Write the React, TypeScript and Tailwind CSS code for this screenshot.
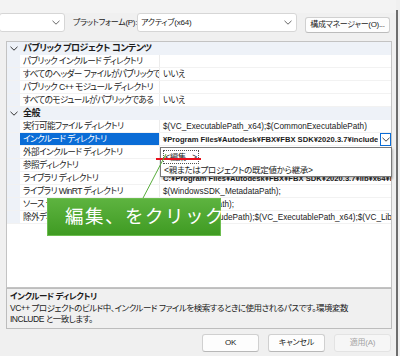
import React from 'react'

const Chevron = ({ className = '' }: { className?: string }) => (
  <svg width="8" height="5" viewBox="0 0 8 5" className={className}>
    <path d="M0.5 0.8 L4 4.2 L7.5 0.8" fill="none" stroke="currentColor" strokeWidth="1" />
  </svg>
)

type RowProps = { name: string; value?: string; bold?: boolean; latin?: boolean; selected?: boolean }

// property grid row: gutter | name | value
function Row({ name, value = '', bold, latin, selected }: RowProps) {
  return (
    <div className="flex h-[13px] border-b border-[#f2f2f2]">
      <div className="w-[13px] shrink-0 bg-[#eef2f8]" />
      <div
        className={
          'w-[140px] shrink-0 pl-[3px] text-[8.6px] tracking-[-0.6px] leading-[13px] whitespace-nowrap overflow-hidden border-r border-[#ececec] ' +
          (selected ? 'bg-[#0a6cd6] text-white' : '')
        }
      >
        {name}
      </div>
      <div className="flex-1 min-w-0 relative flex items-center">
        <div
          className={
            'pl-[3px] whitespace-nowrap overflow-hidden leading-[13px] ' +
            (latin ? (bold ? 'text-[7.6px] font-bold' : 'text-[8.2px]') : 'text-[8.6px] tracking-[-0.6px]')
          }
        >
          {value}
        </div>
        {selected && (
          <div className="absolute right-[0px] top-[0px] w-[11px] h-[13px] border border-[#0a6cd6] bg-white flex items-center justify-center text-[#444]">
            <Chevron />
          </div>
        )}
      </div>
    </div>
  )
}

function Category({ name }: { name: string }) {
  return (
    <div className="flex items-center h-[13px] bg-[#eef2f8]">
      <div className="w-[13px] shrink-0 flex justify-center text-[#333]">
        <Chevron />
      </div>
      <div className="pl-[3px] text-[9px] tracking-[-0.5px] leading-[13px] font-bold">{name}</div>
    </div>
  )
}

export default function App() {
  return (
    <div className="w-[400px] h-[356px] overflow-hidden relative flex bg-[#f0f0f0] text-[#1b1b1b] font-['Liberation_Sans','Noto_Sans_CJK_JP',sans-serif] [font-feature-settings:'palt']">
      <div className="w-[396px] flex flex-col">
        <div className="h-[13px] bg-[#f3f3f3]" />
        <div className="flex items-start h-[20px]">
          <div className="w-[66px] h-[19px] ml-[-1px] bg-white border border-[#d6d6d6] rounded-[3px] flex items-center justify-end pr-[4px] text-[#666]">
            <Chevron />
          </div>
          <div className="ml-[8px] w-[57px] text-[8px] tracking-[-0.3px] leading-[19px] whitespace-nowrap">プラットフォーム(P):</div>
          <div className="ml-[7px] w-[160px] h-[19px] bg-white border border-[#d6d6d6] rounded-[3px] flex items-center justify-between pl-[3px] pr-[4px] text-[8px] tracking-[-0.2px] text-[#666]">
            <span className="text-[#1b1b1b]">アクティブ(x64)</span>
            <Chevron />
          </div>
          <div className="ml-[8px] mt-[4px] w-[85px] h-[16px] bg-[#fdfdfd] border border-[#d0d0d0] border-b-[#bcbcbc] rounded-[3px] flex items-center justify-center text-[8px] tracking-[-0.3px] whitespace-nowrap">
            構成マネージャー(O)...
          </div>
        </div>

        <div className="mt-[8px] ml-[6px] w-[386px] h-[247px] border border-[#c3c3c3] bg-white overflow-hidden flex flex-col">
          <Category name="パブリック プロジェクト コンテンツ" />
          <Row name="パブリック インクルード ディレクトリ" />
          <Row name="すべてのヘッダー ファイルがパブリックである" value="いいえ" />
          <Row name="パブリック C++ モジュール ディレクトリ" />
          <Row name="すべてのモジュールがパブリックである" value="いいえ" />
          <Category name="全般" />
          <Row name="実行可能ファイル ディレクトリ" latin value="$(VC_ExecutablePath_x64);$(CommonExecutablePath)" />
          <Row name="インクルード ディレクトリ" latin bold selected value="¥Program Files¥Autodesk¥FBX¥FBX SDK¥2020.3.7¥include" />
          <Row name="外部インクルード ディレクトリ" latin value="$(VC_IncludePath);$(WindowsSDK_IncludePath);" />
          <Row name="参照ディレクトリ" latin value="$(VC_ReferencesPath_x64);" />
          <Row name="ライブラリ ディレクトリ" latin bold value="C:¥Program Files¥Autodesk¥FBX¥FBX SDK¥2020.3.7¥lib¥x64¥release" />
          <Row name="ライブラリ WinRT ディレクトリ" latin value="$(WindowsSDK_MetadataPath);" />
          <Row name="ソース ディレクトリ" latin value="$(VC_SourcePath);" />
          <Row name="除外ディレクトリ" latin value="$(CommonExcludePath);$(VC_ExecutablePath_x64);$(VC_LibraryPath_x64)" />
        </div>

        <div className="ml-[6px] w-[386px] h-[41px] border border-[#bdbdbd] bg-[#f0f0f0] px-[3px] pt-[2px] text-[8.5px] tracking-[-0.5px] leading-[11.5px]">
          <div className="font-bold">インクルード ディレクトリ</div>
          <div className="whitespace-nowrap">VC++ プロジェクトのビルド中、インクルード ファイルを検索するときに使用されるパスです。環境変数</div>
          <div>INCLUDE と一致します。</div>
        </div>

        <div className="mt-[5px] flex justify-end gap-[9px] pr-[5px] text-[8px] tracking-[-0.2px]">
          <div className="w-[57px] h-[18px] bg-[#fdfdfd] border border-[#d0d0d0] border-b-[#b8b8b8] rounded-[3px] flex items-center justify-center">OK</div>
          <div className="w-[57px] h-[18px] bg-[#fdfdfd] border border-[#d0d0d0] border-b-[#b8b8b8] rounded-[3px] flex items-center justify-center">キャンセル</div>
          <div className="w-[57px] h-[18px] bg-[#f6f6f6] border border-[#e3e3e3] rounded-[3px] flex items-center justify-center text-[#a3a3a3]">適用(A)</div>
        </div>
      </div>
      <div className="w-[2px] bg-[#6e6e6e] mt-[10px]" />
      <div className="flex-1 bg-[#f0f0f0]" />

      {/* dropdown popup */}
      <div className="absolute left-[160px] top-[147px] w-[232px] h-[30px] bg-white border border-[#7a7a7a] shadow-[1px_2px_2px_rgba(0,0,0,0.25)] pt-[2px] text-[8.5px] tracking-[-0.3px] leading-[12px]">
        <div className="ml-[2px] inline-block px-[1px] border border-dotted border-[#555]">&lt;編集...&gt;</div>
        <div className="pl-[3px]">&lt;親またはプロジェクトの既定値から継承&gt;</div>
      </div>

      {/* red underline */}
      <div className="absolute left-[156px] top-[158px] w-[45px] h-[2px] bg-[#e8101c]" />

      {/* green pointer line */}
      <svg className="absolute left-0 top-0 pointer-events-none" width="400" height="356">
        <line x1="166" y1="154" x2="142" y2="200" stroke="#58ad3c" strokeWidth="1" />
      </svg>

      {/* callout */}
      <div className="absolute left-[47px] top-[198px] w-[174px] h-[38px] bg-gradient-to-b from-[#5db33f] to-[#3f9b22] border border-[#6cbd4f] flex items-center pl-[17px] text-white text-[18.5px] tracking-[1.5px] whitespace-nowrap [font-feature-settings:normal]">
        編集、をクリック
      </div>
    </div>
  )
}
